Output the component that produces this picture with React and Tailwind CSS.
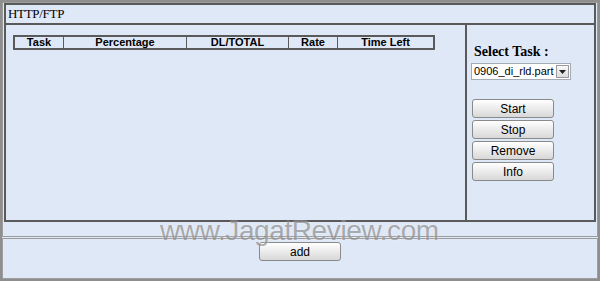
import React from "react";

const cols = [
  { label: "Task", w: "w-[49px]" },
  { label: "Percentage", w: "w-[123px]" },
  { label: "DL/TOTAL", w: "w-[102px]" },
  { label: "Rate", w: "w-[49px]" },
  { label: "Time Left", w: "flex-1" },
];

function Btn({ children, className = "" }) {
  return (
    <button
      className={
        "h-[19px] border border-[#8a8a8a] rounded-[3px] bg-gradient-to-b from-[#ffffff] to-[#d8d8d8] text-[12px] text-black leading-none " +
        className
      }
    >
      {children}
    </button>
  );
}

export default function App() {
  return (
    <div className="relative w-[600px] h-[281px] bg-[#dfe8f6] border-2 border-[#8e8e8e] flex flex-col gap-[1px] font-['Liberation_Sans',Arial,sans-serif] overflow-hidden">
      <div className="h-[235px] border border-[#9c9c9c] px-[1px] flex flex-col">
        <div className="h-[219px] border-2 border-[#5a5a5a] flex flex-col">
          <div className="h-[20px] border-b-2 border-[#5a5a5a] flex items-center pl-[2px] font-['Liberation_Serif',serif] text-[13px] tracking-[-0.3px] text-black">
            HTTP/FTP
          </div>
          <div className="flex-1 flex">
            <div className="w-[461px] border-r-2 border-[#5a5a5a] pl-[7px] pt-[10px]">
              <div className="w-[422px] h-[15px] border-2 border-[#5a5a5a] flex text-[11px] font-bold text-black">
                {cols.map((c, i) => (
                  <div
                    key={c.label}
                    className={
                      c.w +
                      " flex items-center justify-center leading-none " +
                      (i < cols.length - 1 ? "border-r border-[#5a5a5a]" : "")
                    }
                  >
                    {c.label}
                  </div>
                ))}
              </div>
            </div>
            <div className="flex-1 flex flex-col pl-[4px] pt-[20px]">
              <div className="pl-[3px] font-['Liberation_Serif',serif] font-bold text-[14px] leading-none text-black">
                Select Task :
              </div>
              <div className="mt-[4px] w-[100px] h-[17px] bg-white border border-[#a5acb5] flex items-center">
                <span className="flex-1 pl-[2px] text-[11px] leading-none text-black whitespace-nowrap overflow-hidden">0906_di_rld.part</span>
                <span className="w-[13px] h-[13px] mr-[1px] border border-[#9a9a9a] bg-gradient-to-b from-[#fafafa] to-[#dcdcdc] flex items-center justify-center">
                  <svg width="7" height="4" viewBox="0 0 7 4">
                    <path d="M0 0h7L3.5 4z" fill="#222" />
                  </svg>
                </span>
              </div>
              <div className="mt-[19px] flex flex-col gap-[2px] pl-[1px]">
                <Btn className="w-[82px]">Start</Btn>
                <Btn className="w-[82px]">Stop</Btn>
                <Btn className="w-[82px]">Remove</Btn>
                <Btn className="w-[82px]">Info</Btn>
              </div>
            </div>
          </div>
        </div>
      </div>
      <div className="flex-1 border border-[#9c9c9c] flex justify-center pt-[3px]">
        <Btn className="w-[82px]">add</Btn>
      </div>
      <div className="absolute left-[158px] top-[208px] text-[28px] tracking-[-0.4px] text-[#8f8f8f] opacity-70 pointer-events-none [text-shadow:0_0_2px_#ffffff]">
        www.JagatReview.com
      </div>
    </div>
  );
}
